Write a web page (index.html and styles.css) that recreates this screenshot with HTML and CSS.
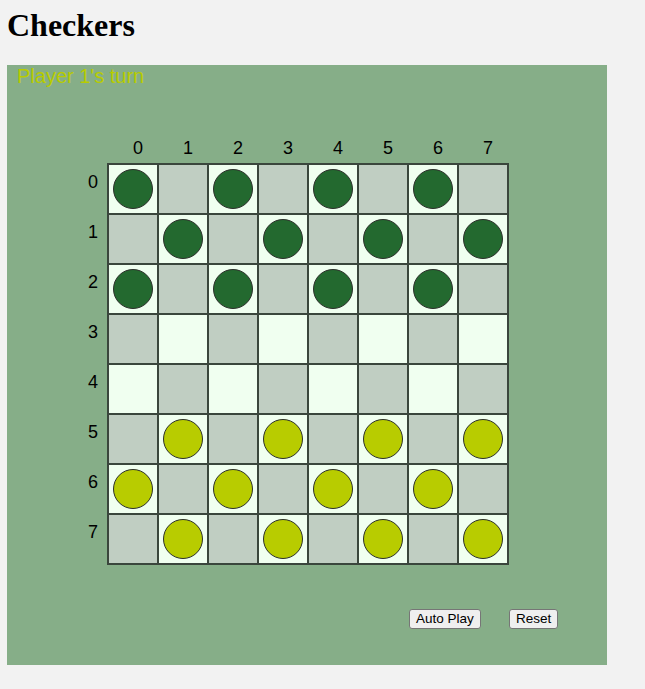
FILE: index.html
```html
<!DOCTYPE html>
<html>
<head>
<meta charset="utf-8">
<title>Checkers</title>
<link rel="stylesheet" href="styles.css">
</head>
<body>
<h1 class="title">Checkers</h1>
<div class="panel">
  <div class="status">Player 1's turn</div>
  <div class="cols">
    <span>0</span><span>1</span><span>2</span><span>3</span><span>4</span><span>5</span><span>6</span><span>7</span>
  </div>
  <div class="main">
    <div class="rows">
      <span>0</span><span>1</span><span>2</span><span>3</span><span>4</span><span>5</span><span>6</span><span>7</span>
    </div>
    <div class="board">
      <div class="cell light"><div class="piece p2"></div></div><div class="cell dark"></div><div class="cell light"><div class="piece p2"></div></div><div class="cell dark"></div><div class="cell light"><div class="piece p2"></div></div><div class="cell dark"></div><div class="cell light"><div class="piece p2"></div></div><div class="cell dark"></div>
      <div class="cell dark"></div><div class="cell light"><div class="piece p2"></div></div><div class="cell dark"></div><div class="cell light"><div class="piece p2"></div></div><div class="cell dark"></div><div class="cell light"><div class="piece p2"></div></div><div class="cell dark"></div><div class="cell light"><div class="piece p2"></div></div>
      <div class="cell light"><div class="piece p2"></div></div><div class="cell dark"></div><div class="cell light"><div class="piece p2"></div></div><div class="cell dark"></div><div class="cell light"><div class="piece p2"></div></div><div class="cell dark"></div><div class="cell light"><div class="piece p2"></div></div><div class="cell dark"></div>
      <div class="cell dark"></div><div class="cell light"></div><div class="cell dark"></div><div class="cell light"></div><div class="cell dark"></div><div class="cell light"></div><div class="cell dark"></div><div class="cell light"></div>
      <div class="cell light"></div><div class="cell dark"></div><div class="cell light"></div><div class="cell dark"></div><div class="cell light"></div><div class="cell dark"></div><div class="cell light"></div><div class="cell dark"></div>
      <div class="cell dark"></div><div class="cell light"><div class="piece p1"></div></div><div class="cell dark"></div><div class="cell light"><div class="piece p1"></div></div><div class="cell dark"></div><div class="cell light"><div class="piece p1"></div></div><div class="cell dark"></div><div class="cell light"><div class="piece p1"></div></div>
      <div class="cell light"><div class="piece p1"></div></div><div class="cell dark"></div><div class="cell light"><div class="piece p1"></div></div><div class="cell dark"></div><div class="cell light"><div class="piece p1"></div></div><div class="cell dark"></div><div class="cell light"><div class="piece p1"></div></div><div class="cell dark"></div>
      <div class="cell dark"></div><div class="cell light"><div class="piece p1"></div></div><div class="cell dark"></div><div class="cell light"><div class="piece p1"></div></div><div class="cell dark"></div><div class="cell light"><div class="piece p1"></div></div><div class="cell dark"></div><div class="cell light"><div class="piece p1"></div></div>
    </div>
  </div>
  <div class="controls">
    <div class="ctl"><button class="btn">Auto Play</button></div>
    <div class="ctl"><button class="btn">Reset</button></div>
  </div>
</div>
</body>
</html>
```
FILE: styles.css
```css
html, body {
  background: #f2f2f2;
}
body {
  margin: 7px;
  font-family: "Liberation Serif", serif;
}
.title {
  margin: 0 0 20.5px;
  font-size: 32px;
  font-weight: bold;
  line-height: normal;
}
.panel {
  width: 600px;
  height: 600px;
  background: #86ae88;
  font-family: "Liberation Sans", Arial, sans-serif;
  display: flex;
  flex-direction: column;
}
.status {
  padding-left: 10px;
  font-size: 20px;
  line-height: 23px;
  height: 23px;
  color: #b8cc00;
}
.cols {
  margin-top: 50px;
  height: 25px;
  padding-left: 106px;
  display: flex;
  font-size: 18px;
  line-height: 20px;
  color: #000;
}
.cols span {
  width: 50px;
  text-align: center;
}
.main {
  display: flex;
}
.rows {
  width: 100px;
  display: flex;
  flex-direction: column;
  font-size: 18px;
  color: #000;
}
.rows span {
  height: 50px;
  line-height: 39px;
  text-align: right;
  padding-right: 9px;
}
.board {
  display: grid;
  grid-template-columns: repeat(8, 50px);
  grid-template-rows: repeat(8, 50px);
  border: 1px solid #3a463c;
  align-self: flex-start;
}
.cell {
  box-sizing: border-box;
  border: 1px solid #3a463c;
  display: flex;
  align-items: center;
  justify-content: center;
}
.light {
  background: #f0fff0;
}
.dark {
  background: #c0cec2;
}
.piece {
  width: 38px;
  height: 38px;
  border-radius: 50%;
  border: 1px solid #2b2f2a;
}
.p2 {
  background: #23692f;
}
.p1 {
  background: #b8cc00;
}
.controls {
  margin-top: 44px;
  padding-left: 402px;
  display: grid;
  grid-template-columns: 100px 100px;
  justify-items: start;
}
.btn {
  font-family: "Liberation Sans", Arial, sans-serif;
  font-size: 13.5px;
  height: 20px;
  padding: 1px 6px;
  background: #efefef;
  border: 1px solid #767676;
  border-radius: 3px;
  color: #000;
}
```
